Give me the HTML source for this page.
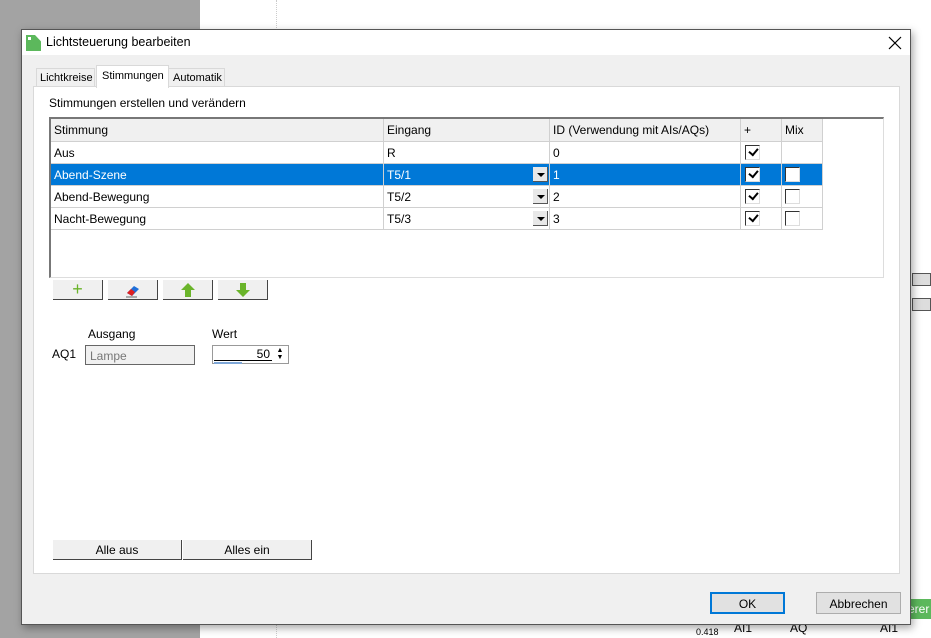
<!DOCTYPE html>
<html><head><meta charset="utf-8"><style>
*{box-sizing:border-box}
body{margin:0;width:931px;height:638px;position:relative;overflow:hidden;background:#fff;font-family:"Liberation Sans",sans-serif;font-size:12px;color:#000}
.a{position:absolute}
.t{position:absolute;white-space:nowrap}
.cell{position:absolute;border-right:1px solid #d0d0d0;border-bottom:1px solid #d0d0d0;padding:4px 0 0 3px;white-space:nowrap}
.hd{background:#f0f0f0}
.sel{background:#0078d7;color:#fff}
.cb{position:absolute;width:15px;height:15px;border:1px solid #333;background:#fff;border-right-color:#ddd;border-bottom-color:#ddd}
.ck{position:absolute;width:15px;height:15px;border:1px solid #333;background:#fff;border-right-color:#ddd;border-bottom-color:#ddd}
.ck:after{content:"";position:absolute;left:3px;top:2px;width:7px;height:4px;border-left:2px solid #000;border-bottom:2px solid #000;transform:rotate(-50deg);transform-origin:center}
.dd{position:absolute;width:15px;height:15px;background:#e8e8e8;border-right:1px solid #555;border-bottom:1px solid #555}
.dd:after{content:"";position:absolute;left:4px;top:6px;border-left:4px solid transparent;border-right:4px solid transparent;border-top:4px solid #000}
.btn{position:absolute;background:#f0f0f0;border-right:1px solid #444;border-bottom:1px solid #444;text-align:center}
</style></head><body>
<div class="a" style="left:0;top:0;width:200px;height:638px;background:#a3a3a3"></div>
<div class="a" style="left:276px;top:0;width:0;height:638px;border-left:1px dotted #ccc"></div>
<div class="a" style="left:912px;top:273px;width:19px;height:13px;border:1px solid #555;background:#ddd"></div>
<div class="a" style="left:912px;top:298px;width:19px;height:13px;border:1px solid #555;background:#ddd"></div>
<div class="a" style="left:906px;top:599px;width:25px;height:20px;background:#5cb85c;color:#fff;font-size:12px;padding:3px 0 0 2px">erer</div>
<div class="t" style="left:696px;top:627px;font-size:9px">0.418</div>
<div class="t" style="left:734px;top:621px;font-size:12px">AI1</div>
<div class="t" style="left:790px;top:621px;font-size:12px">AQ</div>
<div class="t" style="left:880px;top:621px;font-size:12px">AI1</div>
<!-- dialog -->
<div class="a" style="left:21px;top:29px;width:890px;height:596px;background:#f0f0f0;border:1px solid #555;box-shadow:2px 3px 8px rgba(0,0,0,.35)">
 <div class="a" style="left:0;top:0;width:888px;height:25px;background:#fff"></div>
 <div class="a" style="left:4px;top:5px;width:15px;height:16px;background:#5cb85c;clip-path:polygon(0 0,60% 0,100% 40%,100% 100%,0 100%)"></div>
 <div class="a" style="left:6px;top:7px;width:3px;height:3px;background:#fff"></div>
 <div class="t" style="left:24px;top:5px;font-size:12.5px">Lichtsteuerung bearbeiten</div>
 <svg class="a" style="left:866px;top:6px" width="14" height="14"><path d="M1 1 L13 13 M13 1 L1 13" stroke="#000" stroke-width="1.2"/></svg>
 <!-- tabs -->
 <div class="a" style="left:14px;top:38px;width:59px;height:20px;border:1px solid #d9d9d9;background:#f0f0f0"></div>
 <div class="t" style="left:18px;top:42px;font-size:11px">Lichtkreise</div>
 <div class="a" style="left:146px;top:38px;width:57px;height:20px;border:1px solid #d9d9d9;background:#f0f0f0"></div>
 <div class="t" style="left:151px;top:42px;font-size:11px">Automatik</div>
 <div class="a" style="left:11px;top:56px;width:867px;height:488px;background:#fff;border:1px solid #d9d9d9"></div>
 <div class="a" style="left:74px;top:35px;width:73px;height:23px;background:#fff;border:1px solid #d9d9d9;border-bottom:none"></div>
 <div class="t" style="left:80px;top:40px;font-size:11px">Stimmungen</div>
 <div class="t" style="left:27px;top:66px;font-size:12px">Stimmungen erstellen und verändern</div>
 <!-- table -->
 <div class="a" style="left:27px;top:87px;width:835px;height:161px;border:1px solid #ddd;border-top:2px solid #777;border-left:2px solid #777;background:#fff">
  <div class="cell hd" style="left:0;top:0;width:333px;height:23px">Stimmung</div>
  <div class="cell hd" style="left:333px;top:0;width:166px;height:23px">Eingang</div>
  <div class="cell hd" style="left:499px;top:0;width:191px;height:23px">ID (Verwendung mit AIs/AQs)</div>
  <div class="cell hd" style="left:690px;top:0;width:41px;height:23px">+</div>
  <div class="cell hd" style="left:731px;top:0;width:41px;height:23px">Mix</div>

  <div class="cell" style="left:0;top:23px;width:333px;height:22px">Aus</div>
  <div class="cell" style="left:333px;top:23px;width:166px;height:22px">R</div>
  <div class="cell" style="left:499px;top:23px;width:191px;height:22px">0</div>
  <div class="cell" style="left:690px;top:23px;width:41px;height:22px"></div>
  <div class="cell" style="left:731px;top:23px;width:41px;height:22px"></div>

  <div class="cell sel" style="left:0;top:45px;width:333px;height:22px">Abend-Szene</div>
  <div class="cell sel" style="left:333px;top:45px;width:166px;height:22px">T5/1</div>
  <div class="cell sel" style="left:499px;top:45px;width:191px;height:22px">1</div>
  <div class="cell sel" style="left:690px;top:45px;width:41px;height:22px"></div>
  <div class="cell sel" style="left:731px;top:45px;width:41px;height:22px"></div>

  <div class="cell" style="left:0;top:67px;width:333px;height:22px">Abend-Bewegung</div>
  <div class="cell" style="left:333px;top:67px;width:166px;height:22px">T5/2</div>
  <div class="cell" style="left:499px;top:67px;width:191px;height:22px">2</div>
  <div class="cell" style="left:690px;top:67px;width:41px;height:22px"></div>
  <div class="cell" style="left:731px;top:67px;width:41px;height:22px"></div>

  <div class="cell" style="left:0;top:89px;width:333px;height:22px">Nacht-Bewegung</div>
  <div class="cell" style="left:333px;top:89px;width:166px;height:22px">T5/3</div>
  <div class="cell" style="left:499px;top:89px;width:191px;height:22px">3</div>
  <div class="cell" style="left:690px;top:89px;width:41px;height:22px"></div>
  <div class="cell" style="left:731px;top:89px;width:41px;height:22px"></div>

  <div class="dd" style="left:482px;top:48px"></div>
  <div class="dd" style="left:482px;top:70px"></div>
  <div class="dd" style="left:482px;top:92px"></div>
  <div class="ck" style="left:694px;top:26px"></div>
  <div class="ck" style="left:694px;top:48px"></div>
  <div class="ck" style="left:694px;top:70px"></div>
  <div class="ck" style="left:694px;top:92px"></div>
  <div class="cb" style="left:734px;top:48px"></div>
  <div class="cb" style="left:734px;top:70px"></div>
  <div class="cb" style="left:734px;top:92px"></div>
 </div>
 <!-- toolbar buttons -->
 <div class="btn" style="left:31px;top:250px;width:50px;height:20px;color:#6ab42a;font-size:18px;line-height:18px">+</div>
 <div class="btn" style="left:86px;top:250px;width:50px;height:20px">
  <svg width="20" height="16" style="margin-top:2px"><path d="M4 11 L11 4 L16 7 L9 14 Z" fill="#1e6fd9"/><path d="M4 11 L8 7 L12 10 L9 14 Z" fill="#e02020"/><path d="M3 15 H14" stroke="#666"/></svg></div>
 <div class="btn" style="left:141px;top:250px;width:50px;height:20px">
  <svg width="16" height="16" style="margin-top:2px"><path d="M8 1 L15 8 H11 V15 H5 V8 H1 Z" fill="#6ab42a"/></svg></div>
 <div class="btn" style="left:196px;top:250px;width:50px;height:20px">
  <svg width="16" height="16" style="margin-top:2px"><path d="M8 15 L15 8 H11 V1 H5 V8 H1 Z" fill="#6ab42a"/></svg></div>
 <div class="t" style="left:66px;top:297px">Ausgang</div>
 <div class="t" style="left:190px;top:297px">Wert</div>
 <div class="t" style="left:30px;top:317px">AQ1</div>
 <div class="a" style="left:63px;top:315px;width:110px;height:20px;border:1px solid #666;background:#f0f0f0;color:#777;padding:3px 0 0 4px">Lampe</div>
 <div class="a" style="left:190px;top:315px;width:77px;height:19px;border:1px solid #999;background:#fff">
  <div class="a" style="left:1px;top:1px;width:58px;height:14px;border-bottom:1px solid #000;text-align:right;padding-right:2px">50</div>
  <div class="a" style="left:1px;top:16px;width:28px;height:2px;background:#7ea7d8"></div>
  <div class="a" style="left:60px;top:1px;width:14px;height:15px;font-size:7px;line-height:7px;text-align:center">▲<br>▼</div>
 </div>
 <div class="btn" style="left:31px;top:510px;width:129px;height:20px;padding-top:3px">Alle aus</div>
 <div class="btn" style="left:161px;top:510px;width:129px;height:20px;padding-top:3px">Alles ein</div>
 <div class="a" style="left:688px;top:562px;width:75px;height:22px;border:2px solid #0078d7;background:#e1e1e1;text-align:center;padding-top:3px">OK</div>
 <div class="a" style="left:794px;top:562px;width:85px;height:22px;border:1px solid #adadad;background:#e1e1e1;text-align:center;padding-top:4px">Abbrechen</div>
</div>
</body></html>
